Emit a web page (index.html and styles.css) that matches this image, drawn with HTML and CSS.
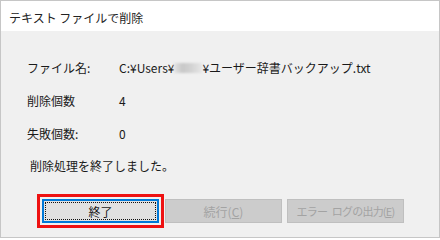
FILE: index.html
```html
<!DOCTYPE html>
<html lang="ja">
<head>
    <meta charset="UTF-8">
    <title>テキスト ファイルで削除</title>
    <link rel="stylesheet" href="styles.css">
</head>
<body>
    <div class="window">
        <div class="titlebar">テキスト ファイルで削除</div>
        <div class="content">
            <div class="info">
                <div class="label">ファイル名:</div>
                <div class="value">C:¥Users¥<span class="blur"></span>¥ユーザー辞書バックアップ.txt</div>
                <div class="label">削除個数</div>
                <div class="value">4</div>
                <div class="label">失敗個数:</div>
                <div class="value">0</div>
            </div>
            <div class="message">削除処理を終了しました。</div>
            <div class="buttons">
                <div class="highlight">
                    <button class="btn default"><span class="focus">終了</span></button>
                </div>
                <button class="btn" disabled>続行(<u>C</u>)</button>
                <button class="btn narrow" disabled>エラー ログの出力(<u>E</u>)</button>
            </div>
        </div>
    </div>
</body>
</html>
```

FILE: styles.css
```css
body {
    margin: 0;
    font-family: "Noto Sans CJK JP", "Noto Sans", sans-serif;
    font-size: 12px;
    color: #1a1a1a;
    background: #fff;
}
.window {
    width: 440px;
    height: 238px;
    box-sizing: border-box;
    border: 1px solid #c6c6c6;
    background: #f0f0f0;
    display: flex;
    flex-direction: column;
}
.titlebar {
    height: 30px;
    line-height: 34px;
    background: #fff;
    padding-left: 8px;
    font-size: 12px;
    color: #222;
}
.content {
    padding: 20px 0 0 26px;
}
.info {
    display: grid;
    grid-template-columns: 92px auto;
    grid-auto-rows: 33px;
    align-items: center;
}
.value {
    display: flex;
    align-items: center;
}
.blur {
    display: inline-block;
    width: 28px;
    height: 10px;
    background: linear-gradient(90deg, #e4e4e4, #c8c8c8 30%, #d2d2d2 60%, #e6e6e6);
    filter: blur(1px);
}
.message {
    margin: 6px 0 0 3px;
    line-height: 20px;
}
.buttons {
    display: flex;
    align-items: center;
    gap: 5px;
    margin-top: 18px;
    margin-left: 10px;
}
.highlight {
    border: 3px solid #ee1111;
    padding: 2px;
    display: flex;
    margin-right: -4px;
}
.btn {
    width: 117px;
    height: 24px;
    font-family: inherit;
    font-size: 12px;
    background: #cccccc;
    border: 1px solid #bfbfbf;
    color: #a3a3a3;
    padding: 0;
    white-space: nowrap;
}
.btn.narrow {
    font-size: 11px;
    letter-spacing: -0.8px;
    word-spacing: 3px;
}
.btn u {
    text-underline-offset: 1px;
}
.btn.default {
    background: #e1e1e1;
    border: 2px solid #0078d7;
    color: #1a1a1a;
    padding: 1px;
    display: flex;
}
.focus {
    flex: 1;
    border: 1px dotted #111;
    display: flex;
    align-items: center;
    justify-content: center;
}
```
